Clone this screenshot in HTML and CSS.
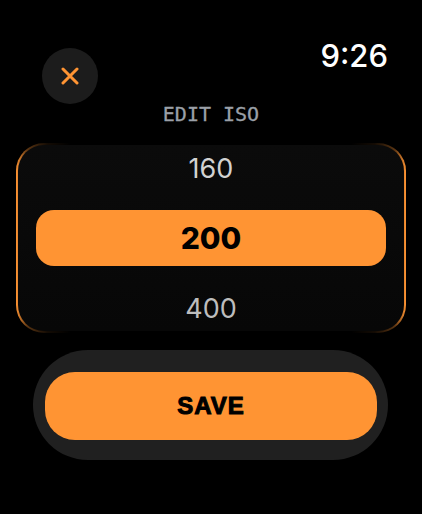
FILE: index.html
```html
<!DOCTYPE html>
<html lang="en">
<head>
    <meta charset="UTF-8">
    <meta name="viewport" content="width=device-width, initial-scale=1.0">
    <title>Edit ISO</title>
    <link rel="stylesheet" href="styles.css">
</head>
<body>

    <div class="top-bar">
        <button class="close-btn" aria-label="Close">
            <svg width="18" height="18" viewBox="0 0 18 18">
                <path d="M2 2 L16 16 M16 2 L2 16" stroke="#ff9433" stroke-width="3" stroke-linecap="round" fill="none"/>
            </svg>
        </button>
        <div class="time">9:26</div>
    </div>

    <div class="title">EDIT ISO</div>

    <div class="picker">
        <div class="picker-item">160</div>
        <div class="picker-item selected">200</div>
        <div class="picker-item lower">400</div>
    </div>

    <div class="save-wrap">
        <button class="save-btn">SAVE</button>
    </div>

</body>
</html>
```

FILE: styles.css
```css
body {
    margin: 0;
    width: 422px;
    height: 514px;
    background-color: #000;
    font-family: 'Inter', 'Roboto', sans-serif;
    overflow: hidden;
}

.top-bar {
    display: flex;
    justify-content: space-between;
    align-items: flex-start;
    padding: 38px 34px 0 42px;
}

.close-btn {
    width: 56px;
    height: 56px;
    margin-top: 10px;
    border: none;
    border-radius: 50%;
    background-color: #1c1c1c;
    display: flex;
    align-items: center;
    justify-content: center;
    padding: 0;
}

.time {
    color: #fff;
    font-size: 31px;
    font-weight: 500;
    line-height: 36px;
}

.title {
    text-align: center;
    color: #9ba0a8;
    font-family: 'DejaVu Sans Mono', monospace;
    font-size: 20px;
    line-height: 20px;
    margin-top: 0;
    -webkit-text-stroke: 0.3px #9ba0a8;
}

/* orange edge only on the sides, fading into the top and bottom */
.picker {
    margin: 19px 16px 0 16px;
    height: 186px;
    padding: 0 18px;
    display: flex;
    flex-direction: column;
    gap: 19px;
    border: 2px solid transparent;
    border-radius: 28px;
    background:
        linear-gradient(#0b0b0b, #070707) padding-box,
        linear-gradient(to right, #ff9433 0%, rgba(255, 148, 51, 0.35) 3%, rgba(255, 148, 51, 0.08) 8%, rgba(255, 148, 51, 0) 14%, rgba(255, 148, 51, 0) 86%, rgba(255, 148, 51, 0.08) 92%, rgba(255, 148, 51, 0.35) 97%, #ff9433 100%) border-box;
}

.picker-item {
    height: 46px;
    display: flex;
    align-items: center;
    justify-content: center;
    font-size: 27px;
    color: #d2d2d2;
}

.picker-item.lower {
    color: #bdbdbd;
}

.picker-item.selected {
    height: 56px;
    background-color: #ff9433;
    border-radius: 18px;
    color: #000;
    font-size: 30px;
    font-weight: 800;
}

.save-wrap {
    margin: 17px 34px 0 33px;
    height: 110px;
    padding: 22px 11px 20px 12px;
    box-sizing: border-box;
    background-color: #202020;
    border-radius: 55px;
    display: flex;
}

.save-btn {
    flex: 1;
    border: none;
    border-radius: 30px;
    background-color: #ff9433;
    color: #000;
    font-family: 'Liberation Sans', Arial, sans-serif;
    font-size: 24px;
    font-weight: 700;
    letter-spacing: 1px;
    -webkit-text-stroke: 1px #000;
    padding: 0;
}
```
